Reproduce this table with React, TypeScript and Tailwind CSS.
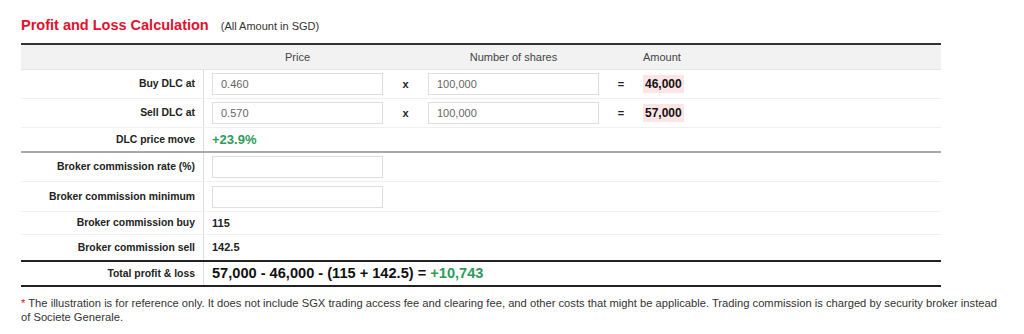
import React from "react";

const labelCls =
  "w-[183px] shrink-0 self-stretch flex items-center justify-end pr-2 border-r border-[#dcdcdc] text-[10.4px] font-bold text-[#222]";

const inputCls =
  "w-[171px] h-[22px] border border-[#dedede] px-2 text-[11px] text-[#666] bg-white outline-none";

const Row = ({
  label,
  className,
  children,
}: {
  label: string;
  className: string;
  children?: React.ReactNode;
}) => (
  <div className={`flex ${className}`}>
    <div className={labelCls}>{label}</div>
    <div className="flex items-center pl-2">{children}</div>
  </div>
);

const CalcRow = ({ label, price, shares, amount }: { label: string; price: string; shares: string; amount: string }) => (
  <Row label={label} className="h-[29px] border-b border-[#f0f0f0]">
    <input className={inputCls} defaultValue={price} />
    <span className="w-[45px] text-center text-[11px] font-bold text-[#222]">x</span>
    <input className={inputCls} defaultValue={shares} />
    <span className="w-[44px] text-center text-[11px] font-bold text-[#222]">=</span>
    <span className="bg-[#fde5e5] px-[2px] text-[12px] font-bold text-[#111]">{amount}</span>
  </Row>
);

export default function App() {
  return (
    <div className="w-[1024px] h-[334px] bg-white pl-[21px] font-['Liberation_Sans',Arial,sans-serif] text-[#333]">
      <div className="flex items-baseline pt-[15px] h-[43px]">
        <h1 className="text-[14.5px] font-bold text-[#e3102e]">Profit and Loss Calculation</h1>
        <span className="ml-3 text-[11px] text-[#333]">(All Amount in SGD)</span>
      </div>

      <div className="w-[920px] border-t-2 border-[#333]">
        {/* header */}
        <div className="flex h-[25px] items-center bg-[#f2f2f2] border-b border-[#e6e6e6] text-[11px] text-[#444]">
          <div className="w-[191px] shrink-0" />
          <span className="w-[171px] text-center">Price</span>
          <span className="w-[45px]" />
          <span className="w-[171px] text-center">Number of shares</span>
          <span className="w-[44px]" />
          <span>Amount</span>
        </div>

        <CalcRow label="Buy DLC at" price="0.460" shares="100,000" amount="46,000" />
        <CalcRow label="Sell DLC at" price="0.570" shares="100,000" amount="57,000" />

        <Row label="DLC price move" className="h-[25px] border-b-2 border-[#aaa]">
          <span className="text-[13px] font-bold text-[#2e9b59]">+23.9%</span>
        </Row>

        <Row label="Broker commission rate (%)" className="h-[29px] border-b border-[#f0f0f0]">
          <input className={inputCls} />
        </Row>
        <Row label="Broker commission minimum" className="h-[30px] border-b border-[#f0f0f0]">
          <input className={inputCls} />
        </Row>
        <Row label="Broker commission buy" className="h-[23px] border-b border-[#f0f0f0]">
          <span className="text-[11px] font-bold text-[#222]">115</span>
        </Row>
        <Row label="Broker commission sell" className="h-[25px]">
          <span className="text-[11px] font-bold text-[#222]">142.5</span>
        </Row>

        <Row label="Total profit & loss" className="h-[27px] border-y-2 border-[#222]">
          <span className="text-[14.6px] font-bold text-[#111]">
            57,000 - 46,000 - (115 + 142.5) = <span className="text-[#2e9b59]">+10,743</span>
          </span>
        </Row>
      </div>

      <p className="w-[987px] mt-[9px] text-[11.2px] leading-[14px] text-[#333]">
        <span className="text-[#e3102e]">*</span> The illustration is for reference only. It does not include SGX trading
        access fee and clearing fee, and other costs that might be applicable. Trading commission is charged by security
        broker instead of Societe Generale.
      </p>
    </div>
  );
}
